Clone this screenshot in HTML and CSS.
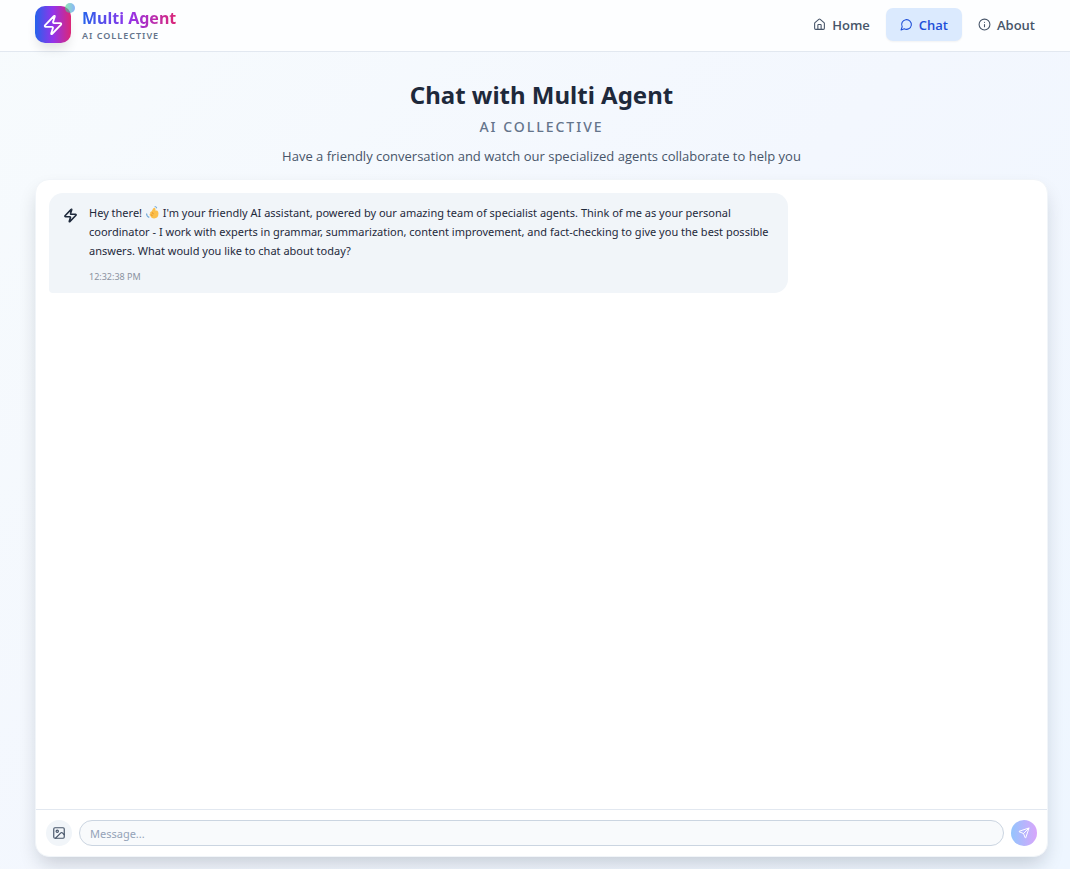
FILE: index.html
```html
<!DOCTYPE html>
<html lang="en">
<head>
   <meta charset="UTF-8">
   <meta name="viewport" content="width=device-width, initial-scale=1.0">
   <title>Multi Agent - Chat</title>
   <link rel="stylesheet" href="styles.css">
</head>
<body>

   <header class="navbar">
      <a class="brand" href="#">
         <span class="brand-logo">
            <svg class="icon" viewBox="0 0 24 24"><path d="M4 14a1 1 0 0 1-.78-1.63l9.9-10.2a.5.5 0 0 1 .86.46l-1.92 6.02A1 1 0 0 0 13 10h7a1 1 0 0 1 .78 1.63l-9.9 10.2a.5.5 0 0 1-.86-.46l1.92-6.02A1 1 0 0 0 11 14z"/></svg>
            <span class="brand-dot"></span>
         </span>
         <span class="brand-text">
            <span class="brand-name">Multi Agent</span>
            <span class="brand-tag">AI COLLECTIVE</span>
         </span>
      </a>
      <nav class="nav-links">
         <a class="nav-link" href="#">
            <svg class="icon" viewBox="0 0 24 24"><path d="M15 21v-8a1 1 0 0 0-1-1h-4a1 1 0 0 0-1 1v8"/><path d="M3 10a2 2 0 0 1 .7-1.5l7-6a2 2 0 0 1 2.6 0l7 6A2 2 0 0 1 21 10v9a2 2 0 0 1-2 2H5a2 2 0 0 1-2-2z"/></svg>
            Home
         </a>
         <a class="nav-link active" href="#">
            <svg class="icon" viewBox="0 0 24 24"><path d="M7.9 20A9 9 0 1 0 4 16.1L2 22z"/></svg>
            Chat
         </a>
         <a class="nav-link" href="#">
            <svg class="icon" viewBox="0 0 24 24"><circle cx="12" cy="12" r="10"/><path d="M12 16v-4M12 8h.01"/></svg>
            About
         </a>
      </nav>
   </header>

   <main class="page">
      <div class="intro">
         <h1>Chat with Multi Agent</h1>
         <p class="intro-tag">AI COLLECTIVE</p>
         <p class="intro-text">Have a friendly conversation and watch our specialized agents collaborate to help you</p>
      </div>

      <section class="chat">
         <div class="messages">
            <div class="message">
               <svg class="icon message-icon" viewBox="0 0 24 24"><path d="M4 14a1 1 0 0 1-.78-1.63l9.9-10.2a.5.5 0 0 1 .86.46l-1.92 6.02A1 1 0 0 0 13 10h7a1 1 0 0 1 .78 1.63l-9.9 10.2a.5.5 0 0 1-.86-.46l1.92-6.02A1 1 0 0 0 11 14z"/></svg>
               <div class="message-body">
                  <p class="message-text">Hey there! <svg class="wave" viewBox="0 0 24 24" role="img" aria-label="waving hand"><path class="wave-hand" d="M12 7c1-3 4-5 5-3l1 5c3-2 5 1 5 5 0 6-3 9-8 9-4 0-6-2-7-5-2-1-2-3 0-4-1-2 0-4 2-4z"/><path class="wave-fold" d="M11 12l3 3M9 16l3 2"/><path class="wave-motion" d="M16 1c2 0 3 1 4 3M1 14c0 4 2 6 5 7"/></svg> I'm your friendly AI assistant, powered by our amazing team of specialist agents. Think of me as your personal coordinator - I work with experts in grammar, summarization, content improvement, and fact-checking to give you the best possible answers. What would you like to chat about today?</p>
                  <time class="message-time">12:32:38 PM</time>
               </div>
            </div>
         </div>

         <form class="composer">
            <button class="round-btn" type="button" aria-label="Attach image">
               <svg class="icon" viewBox="0 0 24 24"><rect x="3" y="3" width="18" height="18" rx="2"/><circle cx="9" cy="9" r="2"/><path d="m21 15-3.1-3.1a2 2 0 0 0-2.8 0L6 21"/></svg>
            </button>
            <input class="composer-input" type="text" placeholder="Message..." aria-label="Message">
            <button class="round-btn send-btn" type="submit" aria-label="Send" disabled>
               <svg class="icon" viewBox="0 0 24 24"><path d="M14.5 21.7a.5.5 0 0 0 .9 0l6.5-19a.5.5 0 0 0-.6-.6l-19 6.5a.5.5 0 0 0 0 .9l7.9 3.2a2 2 0 0 1 1.1 1.1z"/><path d="m21.9 2.1-10.9 11"/></svg>
            </button>
         </form>
      </section>
   </main>

</body>
</html>
```
FILE: styles.css
```css
* {
   box-sizing: border-box;
}

body {
   display: flex;
   flex-direction: column;
   min-height: 100vh;
   margin: 0;
   font-family: "Noto Sans", "Open Sans", sans-serif;
   color: #1e293b;
   background: linear-gradient(135deg, #f7fbfd 0%, #f3f7fe 50%, #eef6ff 100%);
}

h1, p {
   margin: 0;
}

a {
   color: inherit;
   text-decoration: none;
}

.icon {
   flex: none;
   width: 13px;
   height: 13px;
   fill: none;
   stroke: currentColor;
   stroke-width: 2;
   stroke-linecap: round;
   stroke-linejoin: round;
}

/* top bar */
.navbar {
   display: flex;
   align-items: center;
   justify-content: space-between;
   height: 52px;
   padding: 0 21px 2px 35px;
   background: #fdfeff;
   border-bottom: 1px solid #e2e8f0;
}

.brand {
   display: flex;
   align-items: center;
   gap: 11px;
}

.brand-logo {
   position: relative;
   display: flex;
   align-items: center;
   justify-content: center;
   width: 36px;
   height: 37px;
   border-radius: 10px;
   color: #fff;
   background: linear-gradient(90deg, #2563eb, #9333ea 50%, #db2777);
   box-shadow: 0 8px 12px -3px rgba(0, 0, 0, 0.12);
}

.brand-logo .icon {
   width: 22px;
   height: 22px;
}

.brand-dot {
   position: absolute;
   top: -3px;
   right: -4px;
   width: 10px;
   height: 10px;
   border-radius: 50%;
   background: linear-gradient(90deg, #4ade80, #3b82f6);
   opacity: 0.6;
}

.brand-text {
   display: flex;
   flex-direction: column;
}

.brand-name {
   font-size: 16px;
   font-weight: 700;
   line-height: 22px;
   color: transparent;
   background: linear-gradient(90deg, #2563eb, #9333ea 50%, #db2777);
   background-clip: text;
   -webkit-background-clip: text;
}

.brand-tag {
   font-size: 9px;
   font-weight: 600;
   line-height: 14px;
   letter-spacing: 1px;
   color: #64748b;
}

.nav-links {
   display: flex;
   gap: 2px;
}

.nav-link {
   display: flex;
   align-items: center;
   gap: 6px;
   height: 33px;
   padding: 0 14px;
   border-radius: 7px;
   font-family: "Open Sans", sans-serif;
   font-size: 13px;
   font-weight: 600;
   color: #475569;
}

.nav-link.active {
   color: #1d4ed8;
   background: #dbeafe;
   box-shadow: 0 1px 2px rgba(0, 0, 0, 0.05);
}

/* page */
.page {
   flex: 1;
   display: flex;
   flex-direction: column;
   padding: 24px 22px 12px 35px;
}

.intro {
   text-align: center;
}

h1 {
   font-size: 24px;
   font-weight: 700;
   line-height: 37px;
}

.intro-tag {
   font-size: 14px;
   font-weight: 500;
   line-height: 28px;
   letter-spacing: 2px;
   color: #64748b;
}

.intro-text {
   font-family: "Open Sans", sans-serif;
   font-size: 13px;
   line-height: 30px;
   color: #475569;
}

/* chat card */
.chat {
   flex: 1;
   display: flex;
   flex-direction: column;
   margin-top: 8px;
   border: 1px solid #f1f5f9;
   border-radius: 14px;
   background: #fff;
   box-shadow: 0 10px 20px -4px rgba(15, 23, 42, 0.2);
}

.messages {
   flex: 1;
   padding: 13px;
}

.message {
   display: flex;
   gap: 11px;
   width: 75%;
   padding: 10px 14px 9px;
   border-radius: 14px 14px 14px 4px;
   background: #f1f5f9;
}

.message-icon {
   width: 15px;
   height: 15px;
   margin-top: 5px;
   stroke-width: 2.5;
}

.message-text {
   font-size: 11px;
   line-height: 19px;
}

.wave {
   width: 13px;
   height: 13px;
   margin: 0 1px;
   vertical-align: -2px;
   fill: none;
}

.wave-hand {
   fill: #fbbf4b;
}

.wave-fold {
   stroke: #e99a2e;
   stroke-width: 2;
}

.wave-motion {
   stroke: #6fa8d8;
   stroke-width: 2;
}

.message-time {
   display: block;
   margin-top: 9px;
   font-size: 9px;
   line-height: 15px;
   color: #8b92a0;
}

.composer {
   display: flex;
   align-items: center;
   gap: 7px;
   padding: 10px;
   border-top: 1px solid #e2e8f0;
}

.round-btn {
   display: flex;
   align-items: center;
   justify-content: center;
   width: 26px;
   height: 26px;
   padding: 0;
   border: none;
   border-radius: 50%;
   color: #475569;
   background: #f1f5f9;
   cursor: pointer;
}

.round-btn .icon {
   width: 14px;
   height: 14px;
}

.send-btn {
   color: #fff;
   background: linear-gradient(90deg, #93c5fd, #d8a5fb);
}

.send-btn .icon {
   width: 12px;
   height: 12px;
}

.composer-input {
   flex: 1;
   min-width: 0;
   height: 26px;
   padding: 0 10px;
   border: 1px solid #cbd5e1;
   border-radius: 13px;
   font: inherit;
   font-size: 11px;
   background: #f8fafc;
}

.composer-input::placeholder {
   color: #94a3b8;
}
```
